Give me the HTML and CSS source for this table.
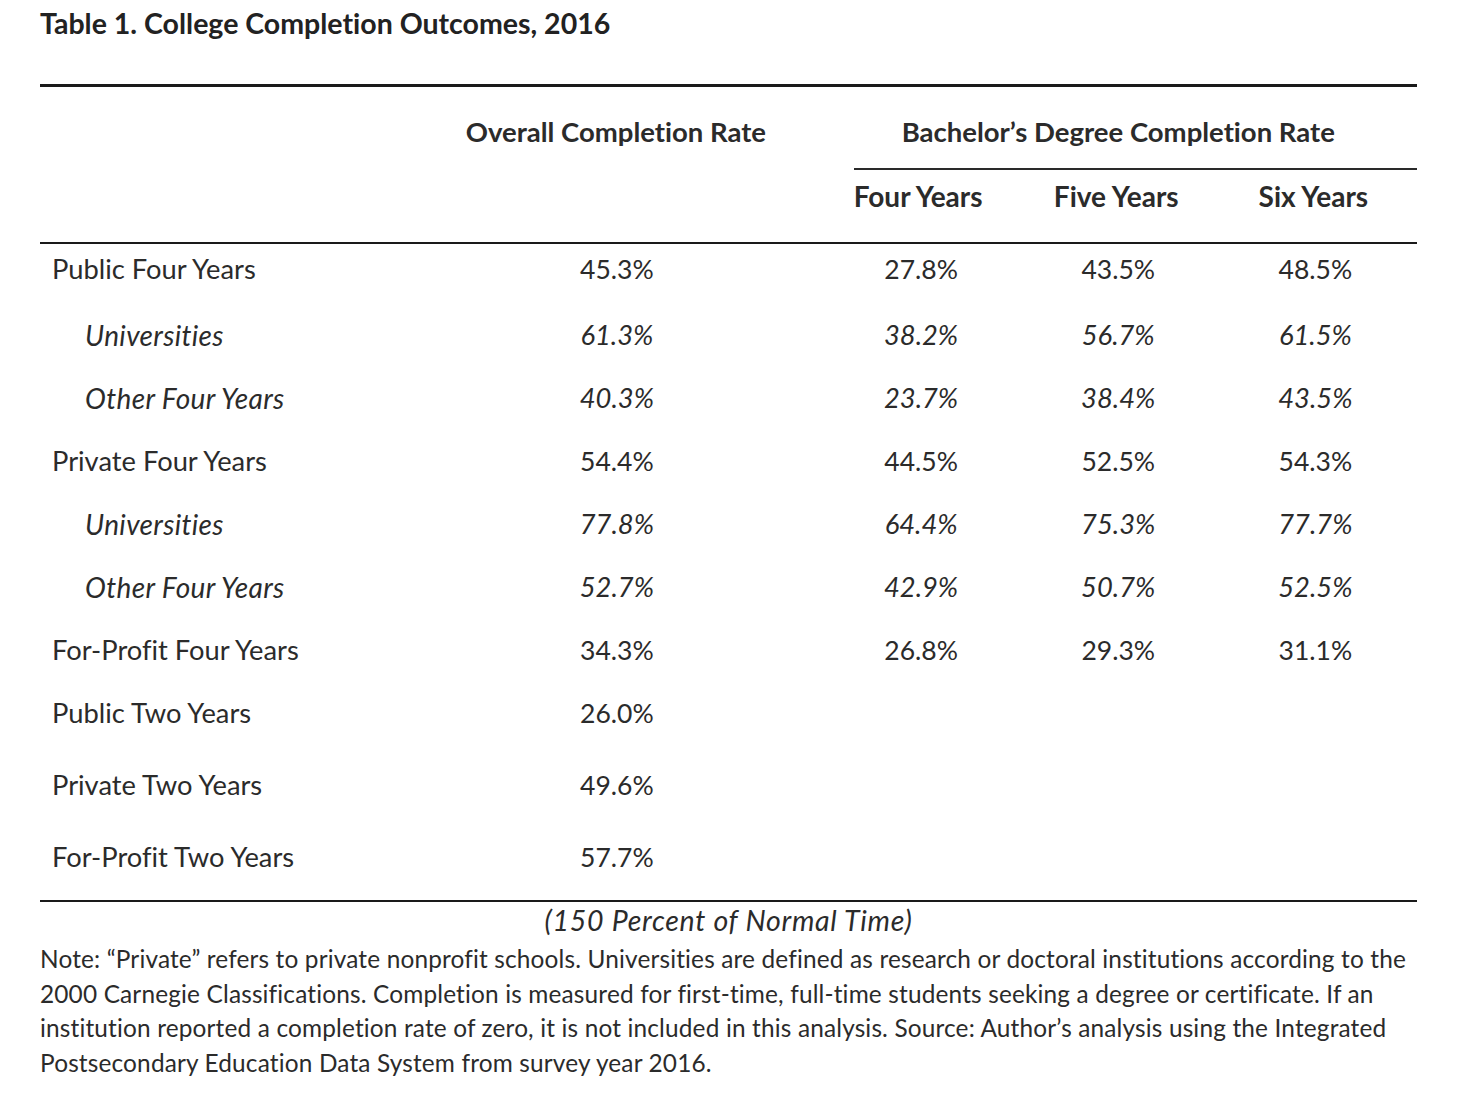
FILE: index.html
```html
<!DOCTYPE html>
<html lang="en">
<head>
<meta charset="utf-8">
<title>Table 1. College Completion Outcomes, 2016</title>
<link rel="stylesheet" href="styles.css">
</head>
<body>
<div class="page">
  <h1 class="title">Table 1. College Completion Outcomes, 2016</h1>
  <table class="data">
    <colgroup>
      <col class="c-label">
      <col class="c-overall">
      <col class="c-yr">
      <col class="c-yr">
      <col class="c-yr">
    </colgroup>
    <thead>
      <tr class="h1row">
        <th class="seg"></th>
        <th class="seg">Overall Completion Rate</th>
        <th class="seg" colspan="3"><div class="group">Bachelor’s Degree Completion Rate</div></th>
      </tr>
      <tr class="h2row">
        <th></th>
        <th></th>
        <th class="sub first-sub">Four Years</th>
        <th class="sub">Five Years</th>
        <th class="sub">Six Years</th>
      </tr>
    </thead>
    <tbody>
      <tr class="row first"><td class="lab">Public Four Years</td><td class="num">45.3%</td><td class="num">27.8%</td><td class="num">43.5%</td><td class="num">48.5%</td></tr>
      <tr class="row it"><td class="lab sub-lab">Universities</td><td class="num">61.3%</td><td class="num">38.2%</td><td class="num">56.7%</td><td class="num">61.5%</td></tr>
      <tr class="row it"><td class="lab sub-lab">Other Four Years</td><td class="num">40.3%</td><td class="num">23.7%</td><td class="num">38.4%</td><td class="num">43.5%</td></tr>
      <tr class="row"><td class="lab">Private Four Years</td><td class="num">54.4%</td><td class="num">44.5%</td><td class="num">52.5%</td><td class="num">54.3%</td></tr>
      <tr class="row it"><td class="lab sub-lab">Universities</td><td class="num">77.8%</td><td class="num">64.4%</td><td class="num">75.3%</td><td class="num">77.7%</td></tr>
      <tr class="row it"><td class="lab sub-lab">Other Four Years</td><td class="num">52.7%</td><td class="num">42.9%</td><td class="num">50.7%</td><td class="num">52.5%</td></tr>
      <tr class="row"><td class="lab">For-Profit Four Years</td><td class="num">34.3%</td><td class="num">26.8%</td><td class="num">29.3%</td><td class="num">31.1%</td></tr>
      <tr class="row tall"><td class="lab">Public Two Years</td><td class="num">26.0%</td><td></td><td></td><td></td></tr>
      <tr class="row tall"><td class="lab">Private Two Years</td><td class="num">49.6%</td><td></td><td></td><td></td></tr>
      <tr class="row last"><td class="lab">For-Profit Two Years</td><td class="num">57.7%</td><td></td><td></td><td></td></tr>
    </tbody>
  </table>
  <p class="caption">(150 Percent of Normal Time)</p>
  <p class="note">Note: “Private” refers to private nonprofit schools. Universities are defined as research or doctoral institutions according to the<br>2000 Carnegie Classifications. Completion is measured for first-time, full-time students seeking a degree or certificate. If an<br>institution reported a completion rate of zero, it is not included in this analysis. Source: Author’s analysis using the Integrated<br>Postsecondary Education Data System from survey year 2016.</p>
</div>
</body>
</html>
```

FILE: styles.css
```css
html, body {
  margin: 0;
  padding: 0;
  background: #ffffff;
}

body {
  font-family: Lato, "Open Sans", "Liberation Sans", sans-serif;
  color: #2b2b2b;
  font-variant-ligatures: none;
}

.page {
  width: 1377px;
  padding: 0 0 0 40px;
}

.title {
  margin: 0;
  padding-top: 7px;
  font-size: 28.5px;
  line-height: 32px;
  font-weight: 700;
  color: #222222;
}

.data {
  margin-top: 45px;
  width: 1377px;
  border-collapse: collapse;
  table-layout: fixed;
  border-top: 3px solid #1a1a1a;
  border-bottom: 2px solid #1a1a1a;
}

.c-label { width: 374px; }
.c-overall { width: 411px; }
.c-yr { width: 197px; }

.data th,
.data td {
  padding: 0;
}

.data th {
  font-weight: 700;
  font-size: 27.5px;
  line-height: 30px;
  color: #2b2b2b;
}

.data .h1row th {
  height: 82px;
  vertical-align: top;
  padding-top: 30px;
  box-sizing: border-box;
}

.data .h1row th:nth-child(2) {
  padding-right: 8px;
}

.group {
  margin-left: 28px;
  padding-bottom: 21px;
  border-bottom: 2px solid #2a2a2a;
  padding-right: 34px;
}

.data .h2row th {
  height: 73px;
  vertical-align: top;
  padding-top: 11px;
  box-sizing: border-box;
  border-bottom: 2px solid #1a1a1a;
}

.data .h2row .sub {
  font-size: 28px;
  padding-right: 10px;
}

.data .h2row .first-sub {
  padding-right: 12px;
}

.data .row td {
  height: 63px;
  vertical-align: top;
  padding-top: 11px;
  box-sizing: border-box;
  font-size: 26.5px;
  line-height: 30px;
}

.data .row.first td {
  height: 66px;
  padding-top: 10px;
}

.data .row.tall td {
  height: 72px;
}

.data .row.last td {
  height: 70px;
}

.data .row .lab {
  text-align: left;
  padding-left: 12px;
  font-size: 27.3px;
}

.data .row .sub-lab {
  padding-left: 45px;
  font-size: 28px;
  letter-spacing: 0.35px;
}

.data .row .num {
  text-align: center;
  padding-right: 6px;
}

.data .it td {
  font-style: italic;
}

.data .it .num {
  font-size: 27.3px;
}

.caption {
  margin: 0;
  padding-top: 3px;
  text-align: center;
  font-style: italic;
  font-size: 28.5px;
  line-height: 30px;
  letter-spacing: 0.7px;
}

.note {
  margin: 7px 0 0 0;
  font-size: 24.4px;
  line-height: 34.5px;
  letter-spacing: 0.16px;
  white-space: nowrap;
}
```
